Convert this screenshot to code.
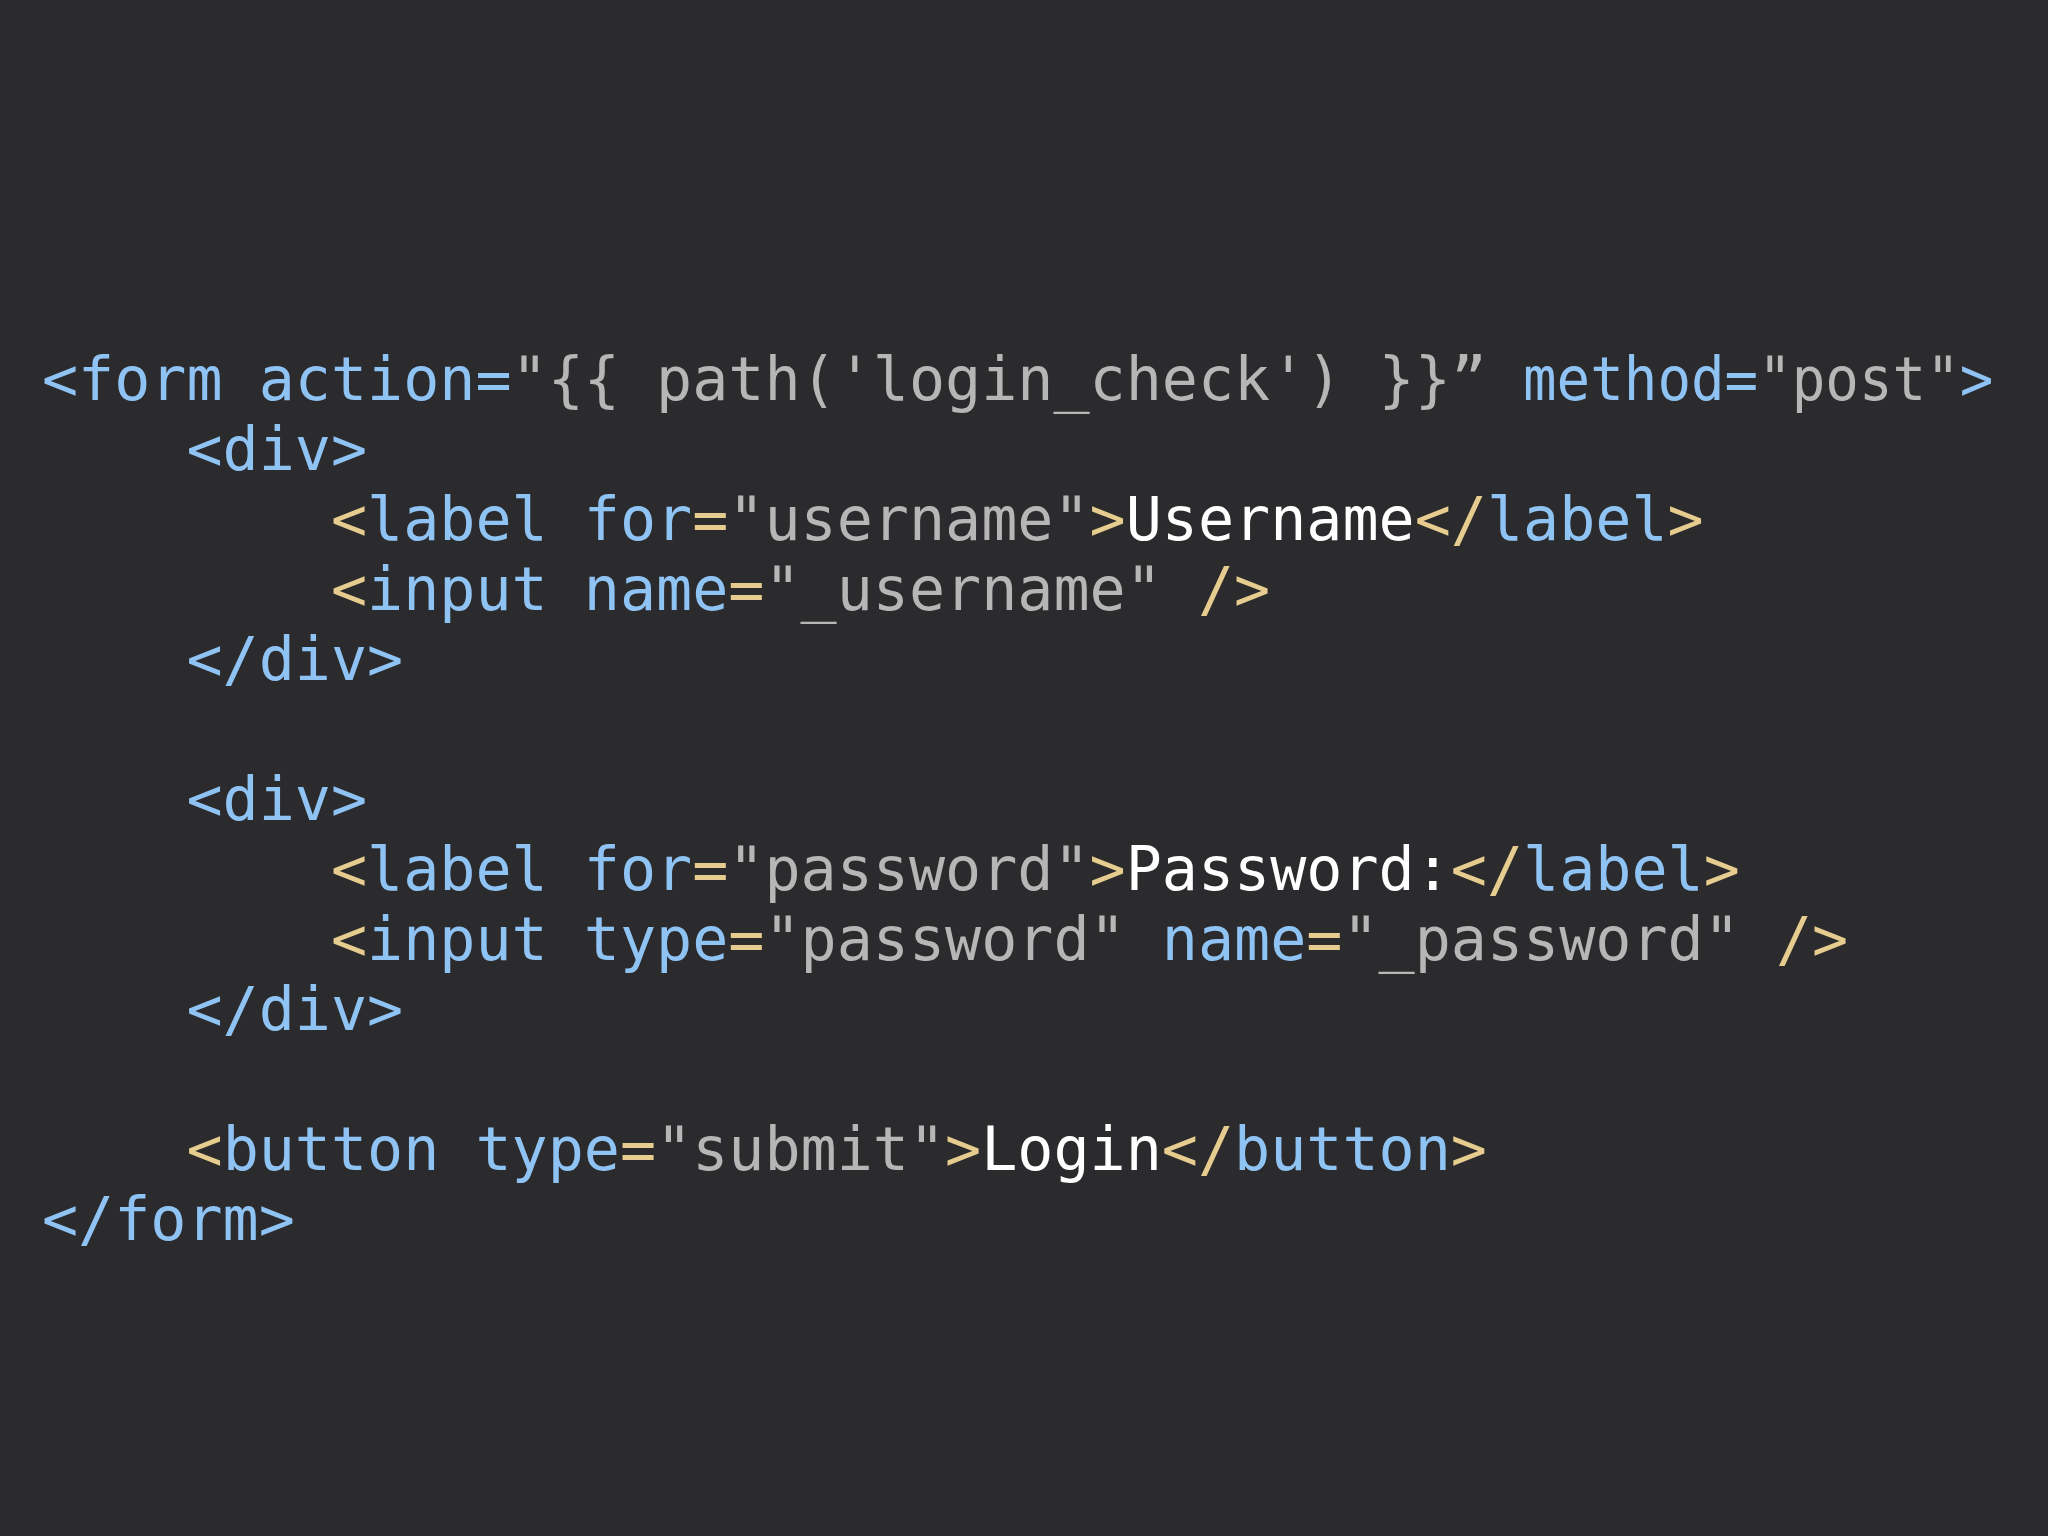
const B = "text-[#8fc3f4]";
const Y = "text-[#e6cc8e]";
const G = "text-[#b6b6b6]";
const W = "text-white";

type Tok = [string, string];

const lines: Tok[][] = [
  [[B, "<form action="], [G, "\"{{ path('login_check') }}”"], [B, " "]],
  [[B, "    <div>"]],
  [[Y, "        <"], [B, "label for"], [Y, "="], [G, "\"username\""], [Y, ">"], [W, "Username"], [Y, "</"], [B, "label"], [Y, ">"]],
  [[Y, "        <"], [B, "input name"], [Y, "="], [G, "\"_username\""], [Y, " />"]],
  [[B, "    </div>"]],
  [],
  [[B, "    <div>"]],
  [[Y, "        <"], [B, "label for"], [Y, "="], [G, "\"password\""], [Y, ">"], [W, "Password:"], [Y, "</"], [B, "label"], [Y, ">"]],
  [[Y, "        <"], [B, "input type"], [Y, "="], [G, "\"password\""], [B, " name"], [Y, "="], [G, "\"_password\""], [Y, " />"]],
  [[B, "    </div>"]],
  [],
  [[Y, "    <"], [B, "button type"], [Y, "="], [G, "\"submit\""], [Y, ">"], [W, "Login"], [Y, "</"], [B, "button"], [Y, ">"]],
  [[B, "</form>"]],
];

export default function App() {
  return (
    <div className="w-[2048px] h-[1536px] bg-[#2b2b2d] overflow-hidden">
      <pre className="pt-[344px] pl-[42px] font-['DejaVu_Sans_Mono',monospace] text-[60px] leading-[70px]">
        {lines.map((line, i) => (
          <div key={i} className="h-[70px] whitespace-pre">
            {line.map(([c, t], j) => (
              <span key={j} className={c}>
                {t}
              </span>
            ))}
            {i === 0 && (
              <span className="inline-block origin-left scale-x-[0.93]">
                <span className={B}>method=</span>
                <span className={G}>"post"</span>
                <span className={B}>&gt;</span>
              </span>
            )}
          </div>
        ))}
      </pre>
    </div>
  );
}
